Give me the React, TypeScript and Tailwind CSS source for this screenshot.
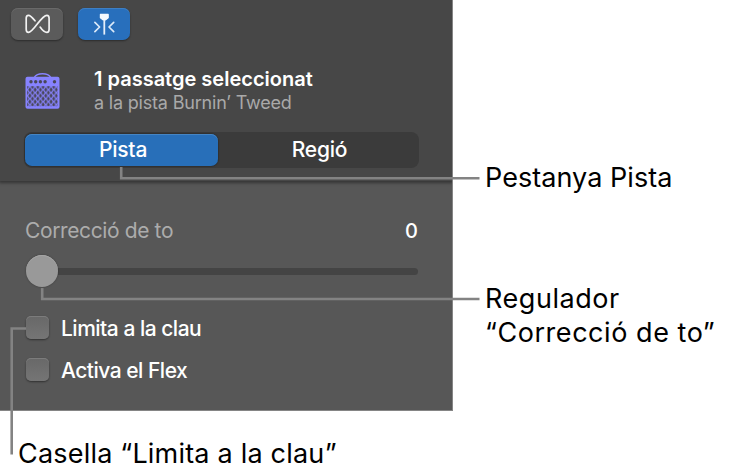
import { useState } from 'react'
import clsx from 'clsx'

const tabs = ['Pista', 'Regió']

const options = ['Limita a la clau', 'Activa el Flex']

function FlexIcon() {
  return (
    <svg width="26" height="20" viewBox="0 0 26 20" fill="none" stroke="#f2f2f2" strokeWidth="1.7" strokeLinecap="round" strokeLinejoin="round">
      <path d="M11 6.800C8.800 4 6.200 1.300 4.400 1.300 2.900 1.300 2.200 2.300 2.200 4.200v11c0 2 .7 3.200 2.200 3.200C9.600 18.400 17 1.300 22.900 1.300c1.500 0 2.200 1.100 2.200 3v11c0 2-.7 3.100-2.200 3.100-2.300 0-5-2.700-6.800-5.300" />
    </svg>
  )
}

function CatchIcon() {
  return (
    <svg width="22" height="22" viewBox="0 0 22 22" fill="none">
      <path d="M7.400 1.400h7.800v3.400L12.600 6.900H10L7.400 4.800z" fill="#f4f8fd" stroke="#f4f8fd" strokeWidth="1.200" strokeLinejoin="round" />
      <path d="M11.300 7v14.600" stroke="#e6effa" strokeWidth="1.800" />
      <path d="M1.900 9.400 6.600 14 1.900 18.600M20.700 9.400 16 14 20.700 18.600" stroke="#dceaf9" strokeWidth="1.700" strokeLinecap="round" strokeLinejoin="round" />
    </svg>
  )
}

function AmpIcon() {
  return (
    <svg width="36" height="38" viewBox="0 0 36 38" fill="none">
      <defs>
        <pattern id="grille" x="2.200" y="14.700" width="5.300" height="6" patternUnits="userSpaceOnUse">
          <path d="M2.650 .6 4.300 3 2.650 5.400 1 3zM0-2.400 1.650 0 0 2.400-1.650 0zM5.300-2.400 6.950 0 5.300 2.400 3.650 0zM0 3.600 1.650 6 0 8.400-1.650 6zM5.300 3.600 6.950 6 5.300 8.400 3.650 6z" fill="#494759" />
        </pattern>
      </defs>
      <path d="M9.500 5.200C11 2.400 13.500 1.700 17.500 1.700s6.500.7 8 3.500" stroke="#8783ff" strokeWidth="1.500" />
      <rect x=".5" y="4.800" width="34" height="32" rx="2" fill="#8783ff" />
      <g fill="#494759">
        <circle cx="6" cy="9.700" r="1.700" />
        <circle cx="10.700" cy="9.700" r="1.700" />
        <circle cx="15.400" cy="9.700" r="1.700" />
        <circle cx="20.100" cy="9.700" r="1.700" />
        <circle cx="29.500" cy="9.700" r="1.700" />
      </g>
      <rect x="2.200" y="14.200" width="30.600" height="20" fill="url(#grille)" />
    </svg>
  )
}

// Leader lines drawn over the panel, from each control to its label
function Leaders() {
  return (
    <svg className="pointer-events-none absolute inset-0" width="732" height="476" fill="none" stroke="#838383" strokeWidth="2.600">
      <path d="M121.200 167v11.300H479.500" />
      <path d="M42.200 288v11H479.500" />
      <path d="M26 328.500H11.700v126" />
    </svg>
  )
}

export default function App() {
  const [activeTab, setActiveTab] = useState('Pista')
  const [checked, setChecked] = useState<string[]>([])

  const toggle = (name: string) => {
    setChecked(checked.includes(name) ? checked.filter((c) => c !== name) : [...checked, name])
  }

  return (
    <div className="relative h-[476px] w-[732px] overflow-hidden bg-white font-['Inter',sans-serif] text-black">
      <div className="flex h-[411px]">
        <div className="flex w-[453px] shrink-0 flex-col overflow-hidden border-r border-b border-[#858585] bg-[#575757]">
          <div className="h-[181px] shrink-0 bg-[#474747] pt-2 shadow-[0_1px_3px_1px_rgba(0,0,0,0.4)]">
            <div className="flex gap-[15px] pl-[11px]">
              <button className="flex h-8 w-[52px] items-center justify-center rounded-[7px] bg-[#5b5b5b] shadow-[0_1px_2px_rgba(0,0,0,0.4),inset_0_1px_0_#696969]">
                <FlexIcon />
              </button>
              <button className="flex h-8 w-[52px] items-center justify-center rounded-[7px] bg-[#286fbc] shadow-[0_1px_2px_rgba(0,0,0,0.4),inset_0_1px_0_#3e7fc4]">
                <CatchIcon />
              </button>
            </div>
            <div className="mt-7 flex h-[50px] pl-[25px]">
              <div className="mt-1 mr-[33px]">
                <AmpIcon />
              </div>
              <div className="whitespace-nowrap">
                <div className="text-[20px] leading-[23px] font-semibold text-white">1 passatge seleccionat</div>
                <div className="text-[18px] leading-6 tracking-[-0.19px] text-[#a9a9a9]">a la pista Burnin’ Tweed</div>
              </div>
            </div>
            <div className="mt-[14px] ml-6 flex h-9 w-[395px] rounded-[8px] bg-[#3b3b3b] px-px py-0.5">
              {tabs.map((tab) => (
                <button
                  key={tab}
                  onClick={() => setActiveTab(tab)}
                  className={clsx(
                    'h-8 rounded-[7px] pl-[3px] text-[21px] leading-8 font-medium tracking-[-0.2px] text-white',
                    tab === 'Pista' ? 'w-[193px]' : 'w-[200px]',
                    activeTab === tab && 'bg-[#286fb9] shadow-[0_0_2px_rgba(0,0,0,0.6),inset_0_1px_0_#4585c4]'
                  )}
                >
                  {tab}
                </button>
              ))}
            </div>
          </div>
          <div className="pt-9 pl-[25px]">
            <div className="flex h-7 w-[393px] items-center justify-between text-[21px] whitespace-nowrap">
              <span className="tracking-[-0.38px] text-[#acacac]">Correcció de to</span>
              <span className="text-[20px] font-medium text-white">0</span>
            </div>
            <div className="mt-[10px] ml-px flex h-8 w-[392px] items-center">
              <div className="z-10 size-8 shrink-0 rounded-full bg-[#999999] shadow-[0_0_2px_rgba(0,0,0,0.35),inset_0_1px_0_#a5a5a5]" />
              <div className="-ml-1 h-[7px] grow rounded-r-full bg-[#444444]" />
            </div>
            <div className="mt-7 ml-px flex flex-col gap-[14px]">
              {options.map((name) => (
                <button key={name} onClick={() => toggle(name)} className="flex h-7 items-center gap-3 whitespace-nowrap">
                  <span
                    className={clsx(
                      'mb-[3px] size-[23px] rounded-[5px] shadow-[0_1px_2px_rgba(0,0,0,0.45),inset_0_1px_0_#7c7c7c]',
                      checked.includes(name) ? 'bg-[#286fb9]' : 'bg-linear-to-b from-[#686868] to-[#757575]'
                    )}
                  />
                  <span className="text-[21px] font-medium tracking-[-0.5px] text-white">{name}</span>
                </button>
              ))}
            </div>
          </div>
        </div>
        <div className="pt-[161px] pl-8 text-[27px] leading-[34px] whitespace-nowrap">
          <div className="tracking-[0.05px]">Pestanya Pista</div>
          <div className="mt-[87px] tracking-[0.55px]">
            Regulador
            <br />
            “Correcció de to”
          </div>
        </div>
      </div>
      <div className="mt-[26px] pl-[18px] text-[27px] leading-[34px] tracking-[0.2px] whitespace-nowrap">Casella “Limita a la clau”</div>
      <Leaders />
    </div>
  )
}
